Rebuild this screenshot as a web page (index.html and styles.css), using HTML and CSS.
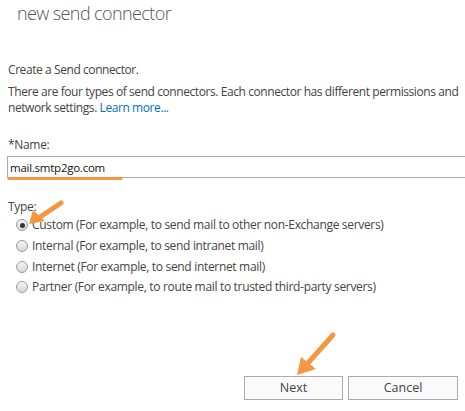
FILE: index.html
```html
<!DOCTYPE html>
<html lang="en">
<head>
  <meta charset="UTF-8">
  <title>new send connector</title>
  <link rel="stylesheet" href="styles.css">
</head>
<body>
  <div class="dialog">
    <h1 class="title">new send connector</h1>

    <div class="intro">
      <p>Create a Send connector.</p>
      <p><span class="line">There are four types of send connectors. Each connector has different permissions and</span><br>network settings. <a href="#">Learn more...</a></p>
    </div>

    <div class="field">
      <label for="name">*Name:</label>
      <input type="text" id="name" value="mail.smtp2go.com">
    </div>

    <div class="field">
      <span class="field-label">Type:</span>
      <label class="radio"><input type="radio" name="type" checked> Custom (For example, to send mail to other non-Exchange servers)</label>
      <label class="radio"><input type="radio" name="type"> Internal (For example, to send intranet mail)</label>
      <label class="radio"><input type="radio" name="type"> Internet (For example, to send internet mail)</label>
      <label class="radio"><input type="radio" name="type"> Partner (For example, to route mail to trusted third-party servers)</label>
    </div>

    <div class="buttons">
      <button class="btn btn-next">Next</button>
      <button class="btn btn-cancel">Cancel</button>
    </div>
  </div>

  <!-- marcas laranja por cima do print -->
  <svg class="marks" width="465" height="411" viewBox="0 0 465 411">
    <line x1="9" y1="178.5" x2="121" y2="178.5" stroke="#f59640" stroke-width="3" stroke-linecap="round"/>
    <g stroke="#f59640" stroke-width="5" stroke-linecap="round" fill="#f59640">
      <line x1="61" y1="203" x2="40" y2="217"/>
      <line x1="333" y1="335" x2="308" y2="363"/>
    </g>
    <g fill="#f59640">
      <polygon points="29,224 33,210 45,221"/>
      <polygon points="297,375 301,357 316,369"/>
    </g>
  </svg>
</body>
</html>
```

FILE: styles.css
```css
* {
  box-sizing: border-box;
}

body {
  margin: 0;
  overflow: hidden;
  background: #fff;
  font-family: 'Open Sans', sans-serif;
  font-size: 12px;
  letter-spacing: -0.32px;
  color: #444;
}

.dialog {
  padding: 0 0 0 8px;
}

.title {
  margin: 0;
  padding: 0 0 0 9px;
  font-size: 18px;
  font-weight: 300;
  line-height: 26px;
  letter-spacing: -0.6px;
  color: #555;
}

.intro {
  margin-top: 36px;
}

.intro p {
  margin: 0 0 6px;
  line-height: 16px;
  letter-spacing: -0.42px;
}

.intro .line {
  white-space: nowrap;
}

.intro a {
  color: #0072c6;
  text-decoration: none;
}

.field {
  display: flex;
  flex-direction: column;
  margin-top: 21px;
}

.field label,
.field-label {
  line-height: 16px;
}

#name {
  width: calc(100% + 20px);
  height: 22px;
  margin: 3px 0 0 -1px;
  padding: 0 2px;
  border: 1px solid #ababab;
  font-family: inherit;
  font-size: 11.5px;
  letter-spacing: -0.25px;
  color: #111;
  outline: none;
}

.radio {
  display: flex;
  align-items: center;
  height: 20.7px;
  padding-left: 8px;
  white-space: nowrap;
}

.radio input {
  appearance: none;
  width: 12px;
  height: 12px;
  margin: 0 4px 0 0;
  border: 1px solid #9a9a9a;
  border-radius: 50%;
  background: linear-gradient(#f4f4f4, #d8d8d8);
  display: grid;
  place-items: center;
}

.radio input:checked::after {
  content: "";
  width: 5px;
  height: 5px;
  border-radius: 50%;
  background: #333;
}

.buttons {
  display: flex;
  gap: 5px;
  margin: 78px 0 0 236px;
}

.btn {
  height: 24px;
  border: 1px solid #acacac;
  background: #fafafa;
  font-family: inherit;
  font-size: 12.5px;
  color: #444;
}

.btn-next {
  width: 99px;
}

.btn-cancel {
  width: 110px;
}

.marks {
  position: absolute;
  top: 0;
  left: 0;
  pointer-events: none;
}
```
